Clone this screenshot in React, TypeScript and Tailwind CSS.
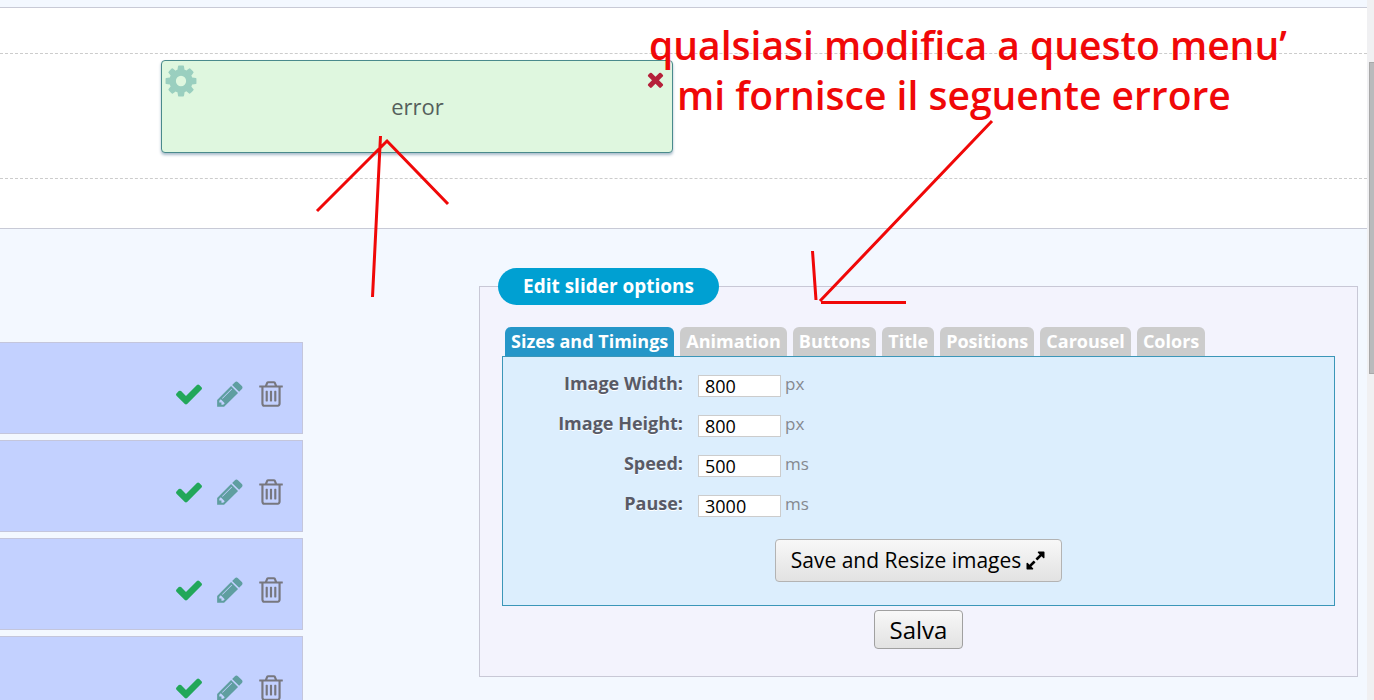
import React from 'react';

const ICONS = {
  check:
    'M1671 566q0 40-28 68l-724 724-136 136q-28 28-68 28t-68-28l-136-136-362-362q-28-28-28-68t28-68l136-136q28-28 68-28t68 28l294 295 656-657q28-28 68-28t68 28l136 136q28 28 28 68z',
  times:
    'M1490 1322q0 40-28 68l-136 136q-28 28-68 28t-68-28l-294-294-294 294q-28 28-68 28t-68-28l-136-136q-28-28-28-68t28-68l294-294-294-294q-28-28-28-68t28-68l136-136q28-28 68-28t68 28l294 294 294-294q28-28 68-28t68 28l136 136q28 28 28 68t-28 68l-294 294 294 294q28 28 28 68z',
  pencil:
    'M491 1536l91-91-235-235-91 91v107h128v128h107zm523-928q0-22-22-22-10 0-17 7l-542 542q-7 7-7 17 0 22 22 22 10 0 17-7l542-542q7-7 7-17zm-54-192l416 416-832 832h-416v-416zm683 96q0 53-37 90l-166 166-416-416 166-165q36-38 90-38 53 0 91 38l235 234q37 39 37 91z',
  trash:
    'M704 736v576q0 14-9 23t-23 9h-64q-14 0-23-9t-9-23v-576q0-14 9-23t23-9h64q14 0 23 9t9 23zm256 0v576q0 14-9 23t-23 9h-64q-14 0-23-9t-9-23v-576q0-14 9-23t23-9h64q14 0 23 9t9 23zm256 0v576q0 14-9 23t-23 9h-64q-14 0-23-9t-9-23v-576q0-14 9-23t23-9h64q14 0 23 9t9 23zm128 724v-948h-896v948q0 22 7 40.5t14.5 27 10.5 8.5h832q3 0 10.5-8.5t14.5-27 7-40.5zm-672-1076h448l-48-117q-7-9-17-11h-317q-10 2-17 11zm928 32v64q0 14-9 23t-23 9h-96v948q0 83-47 143.5t-113 60.5h-832q-66 0-113-58.5t-47-141.5v-952h-96q-14 0-23-9t-9-23v-64q0-14 9-23t23-9h309l70-167q15-37 54-63t79-26h320q40 0 79 26t54 63l70 167h309q14 0 23 9t9 23z',
  cog:
    'M1152 896q0-106-75-181t-181-75-181 75-75 181 75 181 181 75 181-75 75-181zm512-109v222q0 12-8 23t-20 13l-185 28q-19 54-39 91 35 50 107 138 10 12 10 25t-9 23q-27 37-99 108t-94 71q-12 0-26-9l-138-108q-44 23-91 38-16 136-29 186-7 28-36 28h-222q-14 0-24.5-8.5t-11.5-21.5l-28-184q-49-16-90-37l-141 107q-10 9-25 9-14 0-25-11-126-114-165-168-7-10-7-23 0-12 8-23 15-21 51-66.5t54-70.5q-27-50-41-99l-183-27q-13-2-21-12.5t-8-23.5v-222q0-12 8-23t19-13l186-28q14-46 39-92-40-57-107-138-10-12-10-24 0-10 9-23 26-36 98.5-107.5t94.5-71.5q13 0 26 10l138 107q44-23 91-38 16-136 29-186 7-28 36-28h222q14 0 24.5 8.5t11.5 21.5l28 184q49 16 90 37l142-107q9-9 24-9 13 0 25 10 129 119 165 170 7 8 7 22 0 12-8 23-15 21-51 66.5t-54 70.5q26 50 41 98l183 28q13 2 21 12.5t8 23.5z',
  expand:
    'M883 1056q0 13-10 23l-332 332 144 144q19 19 19 45t-19 45-45 19h-448q-26 0-45-19t-19-45v-448q0-26 19-45t45-19 45 19l144 144 332-332q10-10 23-10t23 10l114 114q10 10 10 23zm781-864v448q0 26-19 45t-45 19-45-19l-144-144-332 332q-10 10-23 10t-23-10l-114-114q-10-10-10-23t10-23l332-332-144-144q-19-19-19-45t19-45 45-19h448q26 0 45 19t19 45z',
};

const Icon = ({ name, className }: { name: keyof typeof ICONS; className: string }) => (
  <svg viewBox="0 0 1792 1792" fill="currentColor" aria-hidden="true" className={className}>
    <path d={ICONS[name]} />
  </svg>
);

const TABS = ['Sizes and Timings', 'Animation', 'Buttons', 'Title', 'Positions', 'Carousel', 'Colors'];

const FIELDS = [
  { id: 'image-width', label: 'Image Width:', value: '800', unit: 'px' },
  { id: 'image-height', label: 'Image Height:', value: '800', unit: 'px' },
  { id: 'speed', label: 'Speed:', value: '500', unit: 'ms' },
  { id: 'pause', label: 'Pause:', value: '3000', unit: 'ms' },
];

const Notice = () => (
  <section className="border-y border-[#c8cad6] bg-white pt-[45px] pb-[49px]">
    <div className="border-y border-dashed border-[#cccccc] pt-1.5 pb-[25px]">
      <div className="ml-[161px] flex h-[93px] w-[512px] items-start justify-between rounded border border-[#4a8a8c] bg-[#dff7df] shadow-[0_2px_3px_#a9bccb]">
        <button type="button" aria-label="Settings" className="ml-px mt-0.5 text-[#9acfbf]">
          <Icon name="cog" className="size-9" />
        </button>
        <p className="self-center pb-0.5 text-[22px] leading-8 text-[#555f5c]">error</p>
        <div className="flex w-9 justify-end pt-[7px] pr-[5px]">
          <button type="button" aria-label="Close" className="text-[#b5213a]">
            <Icon name="times" className="size-[23px]" />
          </button>
        </div>
      </div>
    </div>
  </section>
);

const SlideRow = () => (
  <li className="flex h-[92px] items-start justify-end gap-[11px] border border-l-0 border-[#c4c6dc] bg-[#c3d1ff] pt-9 pr-4">
    <button type="button" aria-label="Enabled" className="text-[#22a75a]">
      <Icon name="check" className="size-[30px]" />
    </button>
    <button type="button" aria-label="Edit" className="text-[#5f9ea0]">
      <Icon name="pencil" className="size-[30px]" />
    </button>
    <button type="button" aria-label="Delete" className="text-[#77777f]">
      <Icon name="trash" className="size-[30px]" />
    </button>
  </li>
);

const SliderOptions = () => (
  <fieldset className="min-w-0 flex-1 border border-[#c8c8d6] bg-[#f3f3fd] px-[18px] pb-[27px]">
    <legend className="h-[37px] rounded-full bg-[#00a0d2] px-[25px] text-[19px] leading-[37px] font-bold text-white">
      Edit slider options
    </legend>
    <div className="mx-1 mt-[22px]">
      <div role="tablist" className="ml-[3px] flex gap-1.5">
        {TABS.map((tab, i) => (
          <button
            key={tab}
            type="button"
            role="tab"
            aria-selected={i === 0}
            className={
              i === 0
                ? 'h-[29px] rounded-t-md bg-[#2596c8] px-1.5 text-lg leading-[29px] font-bold text-white'
                : 'h-[29px] rounded-t-md bg-[#cccccc] px-1.5 text-lg leading-[29px] font-bold text-white'
            }
          >
            {tab}
          </button>
        ))}
      </div>
      <div className="flex h-[250px] flex-col border border-[#3b96b8] bg-[#dceefd] pt-[18px]">
        <div className="flex flex-col gap-[18px]">
          {FIELDS.map((field) => (
            <div key={field.id} className="flex h-[22px] items-center">
              <label
                htmlFor={field.id}
                className="w-[180px] pb-1.5 text-right text-lg leading-6 font-bold text-[#585a66] [text-shadow:0_1px_0_#ffffff]"
              >
                {field.label}
              </label>
              <input
                id={field.id}
                type="text"
                defaultValue={field.value}
                className="ml-[15px] h-[22px] w-[83px] border border-[#cccccc] bg-white px-1.5 text-lg text-black"
              />
              <span className="ml-1 pb-1 text-[17px] leading-6 text-[#85898f]">{field.unit}</span>
            </div>
          ))}
        </div>
        <button
          type="button"
          className="mt-[22px] flex h-[43px] items-center gap-1 self-center rounded border border-[#b3b3b3] bg-linear-to-b from-[#f8f8f8] to-[#e2e2e2] px-[15px] text-[21px] text-black"
        >
          Save and Resize images
          <Icon name="expand" className="size-[21px]" />
        </button>
      </div>
      <button
        type="submit"
        className="mx-auto mt-1 block h-[39px] rounded border border-[#a0a0a0] bg-linear-to-b from-[#f8f8f8] to-[#e2e2e2] px-[15px] text-2xl leading-[37px] text-black"
      >
        Salva
      </button>
    </div>
  </fieldset>
);

// Red notes and arrows laid over the page
const Annotations = () => (
  <div className="pointer-events-none text-[#f00808]">
    <div className="absolute top-5 left-[649px] font-['Comic_Sans_MS','Open_Sans',sans-serif] text-[39px] leading-[50px] font-semibold whitespace-nowrap">
      <p>qualsiasi modifica a questo menu’</p>
      <p className="pl-7">mi fornisce il seguente errore</p>
    </div>
    <svg className="absolute top-[130px] left-[310px] h-[170px] w-[145px]" fill="none" stroke="currentColor" strokeWidth="3">
      <path d="M70.5 6L62.5 167M7 81L77 11M76 10L138 74" />
    </svg>
    <svg className="absolute top-[115px] left-[805px] h-[195px] w-[195px]" fill="none" stroke="currentColor" strokeWidth="3">
      <path d="M187 6L15 186M7.500 136L11 185M16 187.500H101" />
    </svg>
  </div>
);

const App = () => (
  <div className="relative flex h-screen overflow-hidden bg-[#f3f8ff] font-['Open_Sans',sans-serif]">
    <main className="min-w-0 flex-1 pt-[7px]">
      <Notice />
      <div className="flex items-start pt-[39px] pr-[9px]">
        <ul className="mt-[74px] mr-[176px] flex w-[303px] flex-col gap-1.5">
          {[1, 2, 3, 4].map((id) => (
            <SlideRow key={id} />
          ))}
        </ul>
        <SliderOptions />
      </div>
    </main>
    <div className="w-[7px] bg-[#f0f0f2] pt-[62px] pl-0.5">
      <div className="h-[312px] border border-r-0 border-[#a8a8a8] bg-[#bababc]" />
    </div>
    <Annotations />
  </div>
);

export default App;
